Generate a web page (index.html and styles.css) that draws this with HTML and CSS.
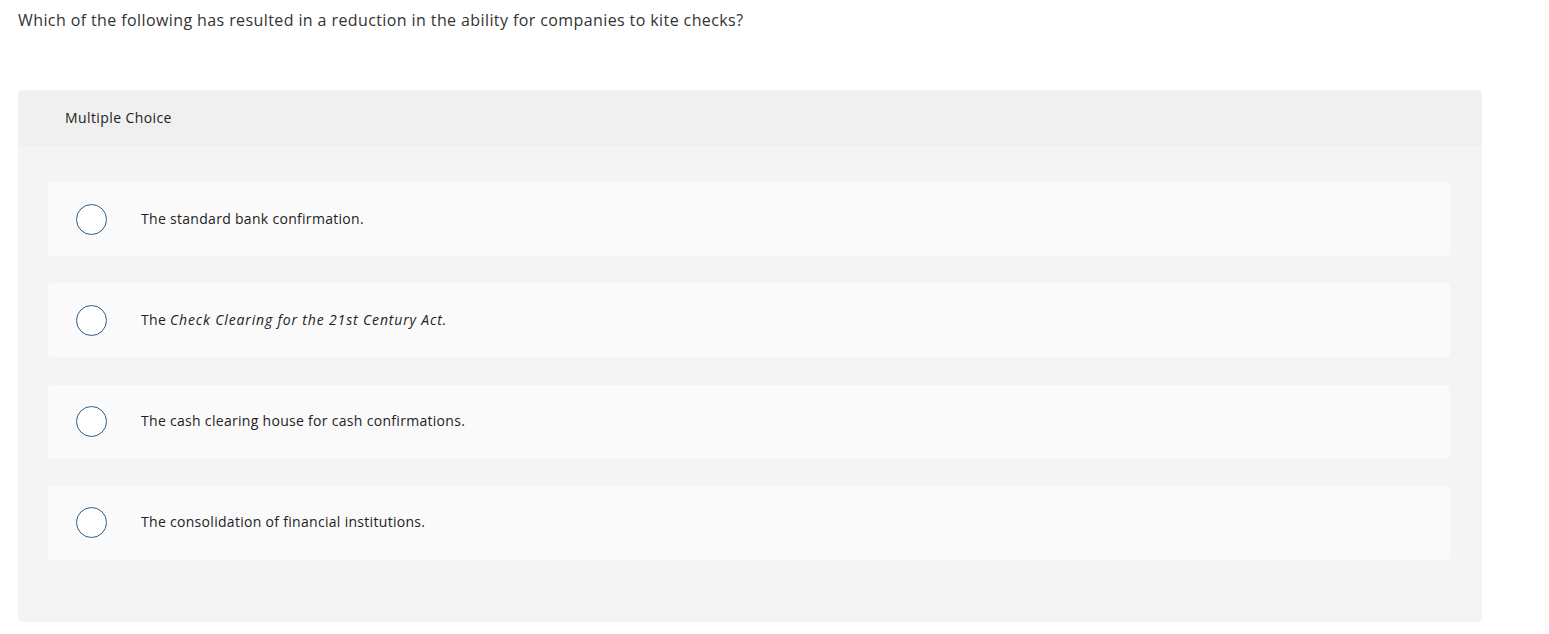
FILE: index.html
```html
<!DOCTYPE html>
<html>
<head>
<meta charset="utf-8">
<link rel="stylesheet" href="styles.css">
</head>
<body>
<div class="page">
  <p class="question">Which of the following has resulted in a reduction in the ability for companies to kite checks?</p>
  <div class="card">
    <div class="card-head">Multiple Choice</div>
    <div class="card-body">
      <div class="option"><span class="radio"></span><span class="label">The standard bank confirmation.</span></div>
      <div class="option"><span class="radio"></span><span class="label">The <em>Check Clearing for the 21st Century Act.</em></span></div>
      <div class="option"><span class="radio"></span><span class="label">The cash clearing house for cash confirmations.</span></div>
      <div class="option"><span class="radio"></span><span class="label">The consolidation of financial institutions.</span></div>
    </div>
  </div>
</div>
</body>
</html>
```
FILE: styles.css
```css
* { box-sizing: border-box; }
html, body { margin: 0; padding: 0; background: #fff; }
body { font-family: "Open Sans", "Liberation Sans", sans-serif; color: #333; font-variant-ligatures: none; }
.page { padding: 9px 67px 0 18px; width: 1549px; }
.question { margin: 0; font-size: 16px; line-height: 22px; color: #333; letter-spacing: 0.4px; }
.card { margin-top: 59px; width: 1464px; border-radius: 4px; overflow: hidden; background: #f4f4f4; }
.card-head { height: 56px; background: #f0f0f0; padding: 0 0 2px 47px; display: flex; align-items: center; font-size: 14px; color: #222; letter-spacing: 0.4px; }
.card-body { padding: 36px 32px 62px 30px; display: flex; flex-direction: column; gap: 27.33px; }
.option { height: 74px; background: #fafafa; border-radius: 3px; display: flex; align-items: center; padding-left: 28px; }
.radio { width: 31px; height: 31px; border-radius: 50%; border: 1.5px solid #2f5b8a; background: #fff; flex: none; }
.label { margin-left: 34px; padding-bottom: 2px; font-size: 14px; color: #222; letter-spacing: 0.3px; }
.label em { font-style: italic; letter-spacing: 0.85px; }
```
